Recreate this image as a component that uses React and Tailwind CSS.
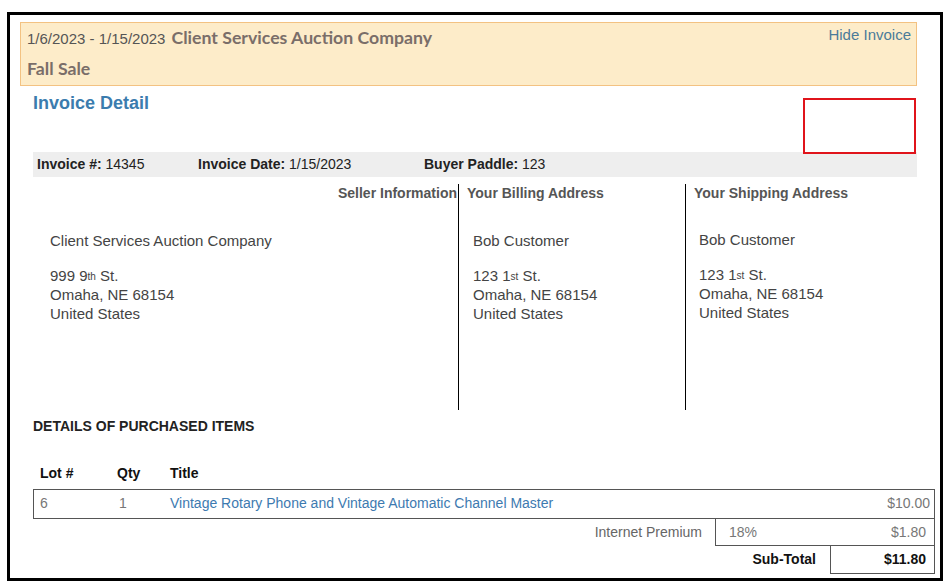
const Sup = ({ children }) => (
    <sup className="text-[10px] relative -top-[1px]">{children}</sup>
)

const Address = ({ name, number, sup }) => (
    <div className="text-[15px] leading-[19px] text-[#444]">
        <div className="mt-[29px]">{name}</div>
        <div className="mt-[16px]">{number}<Sup>{sup}</Sup> St.</div>
        <div>Omaha, NE 68154</div>
        <div>United States</div>
    </div>
)

const App = () => {
    return (
        <div className="w-[949px] h-[587px] bg-white pt-[12px] pl-[7px] font-['Liberation_Sans',Arial,sans-serif]">
            <div className="relative w-[936px] h-[569px] border-[3px] border-black pt-[7px] pl-[10px]">

                {/* sale header */}
                <div className="w-[897px] h-[64px] bg-[#fdecc9] border border-[#f3c282] flex justify-between pl-[6px] pr-[5px]">
                    <div className="leading-[30px]">
                        <div className="flex items-baseline">
                            <span className="text-[15px] text-[#555]">1/6/2023 - 1/15/2023</span>
                            <span className="ml-[6px] text-[17.7px] font-bold text-[#7a6e69] font-['Lato',sans-serif]">Client Services Auction Company</span>
                        </div>
                        <div className="text-[17.7px] font-bold text-[#7a6e69] font-['Lato',sans-serif]">Fall Sale</div>
                    </div>
                    <div className="text-[15px] text-[#4b7b99] leading-[22px] pt-[1px]">Hide Invoice</div>
                </div>

                <div className="pl-[13px]">
                    <div className="h-[66px] pt-[7px]">
                        <div className="text-[18px] leading-[20px] font-bold text-[#3b7cae]">Invoice Detail</div>
                    </div>

                    {/* invoice summary bar */}
                    <div className="w-[884px] h-[25px] bg-[#eeeeee] flex items-center pl-[4px] text-[14px] text-[#222]">
                        <div className="w-[161px]"><b>Invoice #:</b> 14345</div>
                        <div className="w-[226px]"><b>Invoice Date:</b> 1/15/2023</div>
                        <div><b>Buyer Paddle:</b> 123</div>
                    </div>

                    {/* addresses */}
                    <div className="flex mt-[7px] h-[226px] w-[884px]">
                        <div className="w-[426px] border-r border-black">
                            <div className="text-[14px] leading-[18px] font-bold text-[#555] text-right pr-[1px]">Seller Information</div>
                            <div className="pl-[17px]">
                                <Address name="Client Services Auction Company" number="999 9" sup="th" />
                            </div>
                        </div>
                        <div className="w-[227px] border-r border-black">
                            <div className="text-[14px] leading-[18px] font-bold text-[#555] pl-[8px]">Your Billing Address</div>
                            <div className="pl-[14px]">
                                <Address name="Bob Customer" number="123 1" sup="st" />
                            </div>
                        </div>
                        <div className="flex-1">
                            <div className="text-[14px] leading-[18px] font-bold text-[#555] pl-[8px]">Your Shipping Address</div>
                            <div className="pl-[13px] -mt-[1px]">
                                <Address name="Bob Customer" number="123 1" sup="st" />
                            </div>
                        </div>
                    </div>

                    <div className="mt-[7px] text-[14px] leading-[18px] font-bold text-[#222]">DETAILS OF PURCHASED ITEMS</div>

                    {/* items */}
                    <div className="w-[902px] mt-[29px] text-[14px]">
                        <div className="flex h-[25px] leading-[18px] font-bold text-[#111] pl-[7px]">
                            <div className="w-[77px]">Lot #</div>
                            <div className="w-[53px]">Qty</div>
                            <div>Title</div>
                        </div>
                        <div className="flex items-center h-[30px] border border-[#555] pl-[6px] pr-[4px] pb-[1px] text-[#777]">
                            <div className="w-[79px]">6</div>
                            <div className="w-[51px]">1</div>
                            <div className="flex-1 text-[#3d7ab0]">Vintage Rotary Phone and Vintage Automatic Channel Master</div>
                            <div>$10.00</div>
                        </div>
                        <div className="flex justify-end h-[27px]">
                            <div className="pr-[13px] pt-[3px] text-[#666]">Internet Premium</div>
                            <div className="w-[220px] border-x border-b border-[#555] flex justify-between pl-[13px] pr-[8px] pt-[3px] text-[#777]">
                                <span>18%</span>
                                <span>$1.80</span>
                            </div>
                        </div>
                        <div className="flex justify-end h-[28px] font-bold text-[#111]">
                            <div className="pr-[14px] pt-[3px]">Sub-Total</div>
                            <div className="w-[105px] border-x border-b border-[#555] text-right pr-[8px] pt-[3px]">$11.80</div>
                        </div>
                    </div>
                </div>

                {/* highlight box */}
                <div className="absolute left-[793px] top-[83px] w-[113px] h-[56px] border-2 border-[#e0141b]"></div>
            </div>
        </div>
    )
}

export default App;
